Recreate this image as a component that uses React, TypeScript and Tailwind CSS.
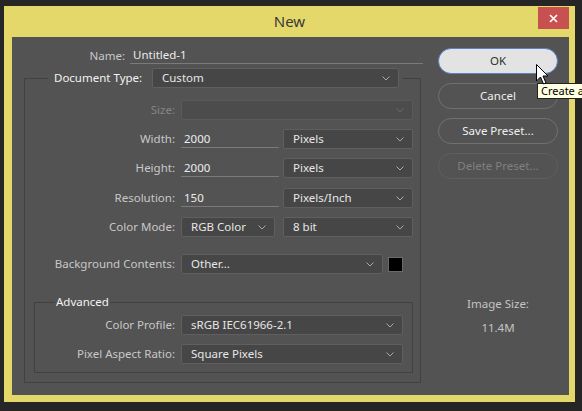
import React from "react";

const Chevron = ({ color = "#a8a8a8" }: { color?: string }) => (
  <svg width="8" height="5" viewBox="0 0 8 5" className="shrink-0">
    <path d="M0.5 0.5 L4 4 L7.5 0.5" fill="none" stroke={color} strokeWidth="1" />
  </svg>
);

const Select = ({ value, w, disabled }: { value: string; w: string; disabled?: boolean }) => (
  <div
    className={`${w} h-[20px] flex items-center justify-between pl-[9px] pr-[8px] rounded-[2px] border ${
      disabled ? "border-[#5a5a5a] bg-[#4c4c4c]" : "border-[#5f5f5f] bg-[#464646]"
    }`}
  >
    <span className="text-[#e6e6e6] truncate">{value}</span>
    <Chevron color={disabled ? "#6a6a6a" : "#a8a8a8"} />
  </div>
);

const Input = ({ value, w }: { value: string; w: string }) => (
  <div className={`${w} h-[17px] border-b border-[#7a7a7a] pl-[3px] text-[#ececec] leading-[16px]`}>{value}</div>
);

const Label = ({ text, w, dim }: { text: string; w: string; dim?: boolean }) => (
  <div className={`${w} shrink-0 text-right pr-[6px] ${dim ? "text-[#858585]" : "text-[#c8c8c8]"}`}>{text}</div>
);

export default function App() {
  return (
    <div
      className="relative w-[582px] h-[411px] overflow-hidden bg-[#262626] pt-[6px] pl-[4px] text-[11.5px] leading-[16px]"
      style={{ fontFamily: '"Noto Sans", "Segoe UI", sans-serif' }}
    >
      <div className="w-[571px] h-[396px] bg-[#e4d86b] flex flex-col">
        {/* title bar */}
        <div className="relative h-[31px] flex items-center justify-center">
          <span className="text-[15px] text-[#3a3a3a] mt-[-1px]">New</span>
          <div className="absolute right-[6px] top-[1px] w-[31px] h-[22px] bg-[#c75050] flex items-center justify-center">
            <svg width="9" height="9" viewBox="0 0 9 9">
              <path d="M1 1 L8 8 M8 1 L1 8" stroke="#fff" strokeWidth="1.6" />
            </svg>
          </div>
        </div>
        {/* content */}
        <div className="ml-[8px] w-[557px] h-[358px] bg-[#535353] flex">
          {/* left column */}
          <div className="w-[411px] flex flex-col">
            {/* name row */}
            <div className="flex items-end mt-[10px] h-[17px]">
              <div className="w-[114px] text-right pr-[1px] text-[#c8c8c8] leading-[16px]">Name:</div>
              <div className="ml-[4px] w-[293px] h-[17px] border-b border-[#7a7a7a] pl-[3px] text-[#ececec] leading-[16px]">
                Untitled-1
              </div>
            </div>
            {/* outer group */}
            <fieldset className="ml-[12px] mt-[4px] w-[397px] h-[315px] border border-[#414141] flex flex-col">
              <legend className="ml-[23px] pl-[6px] pr-[4px] flex items-center">
                <span className="w-[98px] shrink-0 text-[#f2f2f2] whitespace-nowrap">Document Type:</span>
                <Select value="Custom" w="w-[247px]" />
              </legend>
              <div className="flex items-center mt-[12px] h-[20px]">
                <Label text="Size:" w="w-[156px]" dim />
                <Select value="" w="w-[232px]" disabled />
              </div>
              <div className="flex items-center mt-[9px] h-[20px]">
                <Label text="Width:" w="w-[156px]" />
                <Input value="2000" w="w-[98px]" />
                <div className="ml-[4px]">
                  <Select value="Pixels" w="w-[130px]" />
                </div>
              </div>
              <div className="flex items-center mt-[9px] h-[20px]">
                <Label text="Height:" w="w-[156px]" />
                <Input value="2000" w="w-[98px]" />
                <div className="ml-[4px]">
                  <Select value="Pixels" w="w-[130px]" />
                </div>
              </div>
              <div className="flex items-center mt-[10px] h-[20px]">
                <Label text="Resolution:" w="w-[156px]" />
                <Input value="150" w="w-[98px]" />
                <div className="ml-[4px]">
                  <Select value="Pixels/Inch" w="w-[130px]" />
                </div>
              </div>
              <div className="flex items-center mt-[9px] h-[20px]">
                <Label text="Color Mode:" w="w-[156px]" />
                <Select value="RGB Color" w="w-[94px]" />
                <div className="ml-[8px]">
                  <Select value="8 bit" w="w-[130px]" />
                </div>
              </div>
              <div className="flex items-center mt-[17px] h-[20px]">
                <Label text="Background Contents:" w="w-[156px]" />
                <Select value="Other..." w="w-[202px]" />
                <div className="ml-[5px] w-[15px] h-[15px] bg-black border border-[#6a6a6a]" />
              </div>
              {/* advanced group */}
              <fieldset className="ml-[9px] mt-[20px] w-[379px] border border-[#414141] pb-[8px]">
                <legend className="ml-[20px] px-[1px] text-[#f2f2f2]">Advanced</legend>
                <div className="flex items-center mt-[5px] h-[20px]">
                  <Label text="Color Profile:" w="w-[146px]" />
                  <Select value="sRGB IEC61966-2.1" w="w-[222px]" />
                </div>
                <div className="flex items-center mt-[9px] h-[20px]">
                  <Label text="Pixel Aspect Ratio:" w="w-[146px]" />
                  <Select value="Square Pixels" w="w-[222px]" />
                </div>
              </fieldset>
            </fieldset>
          </div>
          {/* right column */}
          <div className="ml-[15px] w-[120px] flex flex-col pt-[11px]">
            <div className="h-[26px] rounded-full bg-[#e3e3e3] border border-[#5b7fca] flex items-center justify-center text-[#303030]">
              OK
            </div>
            <div className="mt-[9px] h-[26px] rounded-full border border-[#707070] flex items-center justify-center text-[#efefef]">
              Cancel
            </div>
            <div className="mt-[9px] h-[26px] rounded-full border border-[#707070] flex items-center justify-center text-[#efefef]">
              Save Preset...
            </div>
            <div className="mt-[9px] h-[26px] rounded-full border border-[#5e5e5e] flex items-center justify-center text-[#808080]">
              Delete Preset...
            </div>
            <div className="mt-[117px] text-center text-[#c4c4c4]">Image Size:</div>
            <div className="mt-[8px] text-center text-[#c4c4c4]">11.4M</div>
          </div>
        </div>
      </div>
      {/* tooltip */}
      <div className="absolute left-[537px] top-[83px] h-[16px] w-[120px] bg-[#ffffe1] border border-[#222] pl-[3px] text-[11px] leading-[14px] text-black whitespace-nowrap">
        Create a new document
      </div>
      {/* cursor */}
      <svg className="absolute left-[536px] top-[64px]" width="14" height="22" viewBox="0 0 14 22">
        <path d="M0.5 0.5 L0.5 17 L4.5 13 L7.5 20 L10 19 L7 12 L12 12 Z" fill="#fff" stroke="#000" strokeWidth="1" />
      </svg>
    </div>
  );
}
